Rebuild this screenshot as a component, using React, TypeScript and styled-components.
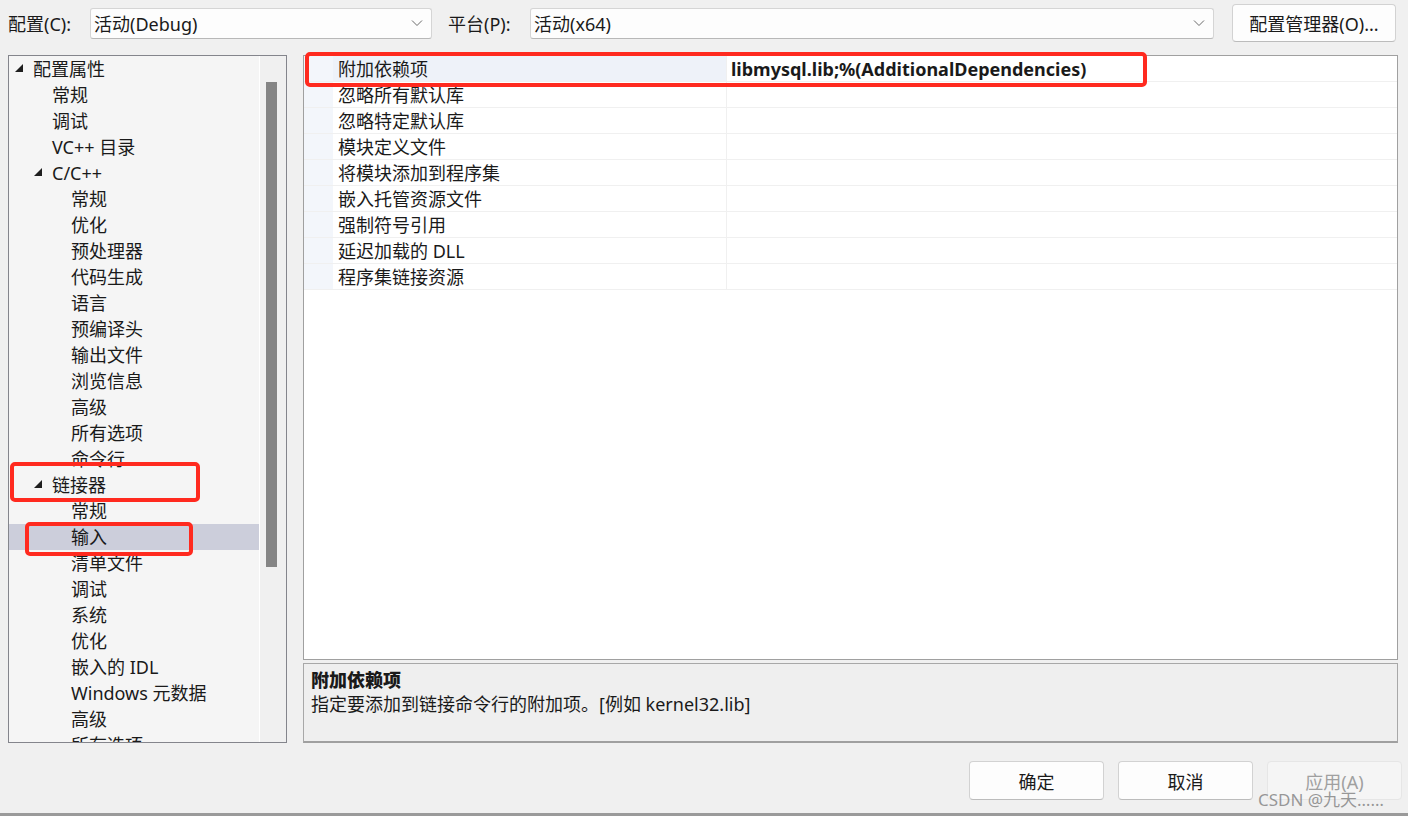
import React from 'react'
import styled, {createGlobalStyle} from 'styled-components'

const GlobalStyle = createGlobalStyle`
  html, body {
    margin: 0;
    padding: 0;
    background: #f0f0f0;
  }
  body {
    font-family: "Noto Sans", "Noto Sans CJK SC", sans-serif;
    color: #1a1a1a;
  }
`

interface TreeNode {
  label: string
  level: number
  expanded?: boolean
  selected?: boolean
}

const tree: TreeNode[] = [
  {label: '配置属性', level: 0, expanded: true},
  {label: '常规', level: 1},
  {label: '调试', level: 1},
  {label: 'VC++ 目录', level: 1},
  {label: 'C/C++', level: 1, expanded: true},
  {label: '常规', level: 2},
  {label: '优化', level: 2},
  {label: '预处理器', level: 2},
  {label: '代码生成', level: 2},
  {label: '语言', level: 2},
  {label: '预编译头', level: 2},
  {label: '输出文件', level: 2},
  {label: '浏览信息', level: 2},
  {label: '高级', level: 2},
  {label: '所有选项', level: 2},
  {label: '命令行', level: 2},
  {label: '链接器', level: 1, expanded: true},
  {label: '常规', level: 2},
  {label: '输入', level: 2, selected: true},
  {label: '清单文件', level: 2},
  {label: '调试', level: 2},
  {label: '系统', level: 2},
  {label: '优化', level: 2},
  {label: '嵌入的 IDL', level: 2},
  {label: 'Windows 元数据', level: 2},
  {label: '高级', level: 2},
  {label: '所有选项', level: 2},
]

const props: {name: string; value?: string}[] = [
  {name: '附加依赖项', value: 'libmysql.lib;%(AdditionalDependencies)'},
  {name: '忽略所有默认库'},
  {name: '忽略特定默认库'},
  {name: '模块定义文件'},
  {name: '将模块添加到程序集'},
  {name: '嵌入托管资源文件'},
  {name: '强制符号引用'},
  {name: '延迟加载的 DLL'},
  {name: '程序集链接资源'},
]

const Chevron = () => (
  <svg width="12" height="8" viewBox="0 0 12 8">
    <polyline points="1,1.5 6,6.5 11,1.5" fill="none" stroke="#6a6a6a" strokeWidth="1" />
  </svg>
)

const Twisty = () => (
  <svg width="8" height="8" viewBox="0 0 8 8">
    <polygon points="8,0 8,8 0,8" fill="#1e1e1e" />
  </svg>
)

const App: React.FC = () => {
  return (
    <Root>
      <GlobalStyle />
      <TopBar>
        <Label>配置(C):</Label>
        <Combo width={342}>
          <span>活动(Debug)</span>
          <Chevron />
        </Combo>
        <Label style={{marginLeft: 16}}>平台(P):</Label>
        <Combo width={684}>
          <span>活动(x64)</span>
          <Chevron />
        </Combo>
        <ManagerButton>配置管理器(O)...</ManagerButton>
      </TopBar>

      <Main>
        <TreePanel>
          <TreeList>
            {tree.map((n, i) => (
              <TreeRow key={i} level={n.level} selected={!!n.selected}>
                <TwistyBox>{n.expanded && <Twisty />}</TwistyBox>
                {n.label}
              </TreeRow>
            ))}
          </TreeList>
          <ScrollTrack>
            <ScrollThumb />
          </ScrollTrack>
        </TreePanel>

        <RightColumn>
          <GridPanel>
            {props.map((p, i) => (
              <GridRow key={i}>
                <Margin />
                <NameCell first={i === 0}>{p.name}</NameCell>
                <ValueCell>{p.value}</ValueCell>
              </GridRow>
            ))}
          </GridPanel>
          <DescPanel>
            <DescTitle>附加依赖项</DescTitle>
            <DescText>指定要添加到链接命令行的附加项。[例如 kernel32.lib]</DescText>
          </DescPanel>
        </RightColumn>
      </Main>

      <Footer>
        <DialogButton>确定</DialogButton>
        <DialogButton>取消</DialogButton>
        <DialogButton disabled>应用(A)</DialogButton>
      </Footer>
      <BottomEdge />

      <RedBox style={{left: 305, top: 52, width: 842, height: 35}} />
      <RedBox style={{left: 10, top: 462, width: 190, height: 40}} />
      <RedBox style={{left: 25, top: 522, width: 168, height: 34}} />
      <Watermark>CSDN @九天……</Watermark>
    </Root>
  )
}

export default App

const Root = styled('div')`
  position: relative;
  width: 1408px;
  height: 816px;
  overflow: hidden;
  background: #f0f0f0;
  font-size: 18px;
  display: flex;
  flex-direction: column;
`

const TopBar = styled('div')`
  height: 46px;
  display: flex;
  align-items: center;
  padding-left: 8px;
  box-sizing: border-box;
`

const Label = styled('span')`
  width: 82px;
  white-space: nowrap;
`

const Combo = styled('div')<{width: number}>`
  width: ${props => props.width}px;
  height: 31px;
  box-sizing: border-box;
  background: #fdfdfd;
  border: 1px solid #d5d5d5;
  border-bottom-color: #b8b8b8;
  border-radius: 3px;
  display: flex;
  align-items: center;
  justify-content: space-between;
  padding: 0 8px 0 3px;
`

const ManagerButton = styled('div')`
  margin-left: 18px;
  width: 164px;
  height: 38px;
  box-sizing: border-box;
  background: #fdfdfd;
  border: 1px solid #d2d2d2;
  border-bottom-color: #bcbcbc;
  border-radius: 4px;
  display: flex;
  align-items: center;
  justify-content: center;
`

const Main = styled('div')`
  margin-top: 9px;
  height: 688px;
  display: flex;
  padding-left: 8px;
`

const TreePanel = styled('div')`
  width: 279px;
  box-sizing: border-box;
  border: 1px solid #84858c;
  background: #f5f5f5;
  display: flex;
  overflow: hidden;
`

const TreeList = styled('div')`
  width: 250px;
  border-right: 1px solid #ffffff;
  overflow: hidden;
`

const TreeRow = styled('div')<{level: number; selected: boolean}>`
  height: 26px;
  display: flex;
  align-items: center;
  padding-left: ${props => 6 + props.level * 19}px;
  background: ${props => (props.selected ? '#cccedb' : 'transparent')};
  white-space: nowrap;
  line-height: 24px;
`

const TwistyBox = styled('span')`
  width: 18px;
  flex: none;
  display: flex;
  align-items: center;
  margin-top: -3px;
`

const ScrollTrack = styled('div')`
  flex: 1;
  background: #f0f0f0;
  padding: 26px 0 0 6px;
`

const ScrollThumb = styled('div')`
  width: 11px;
  height: 485px;
  background: #858585;
`

const RightColumn = styled('div')`
  margin-left: 16px;
  width: 1095px;
  display: flex;
  flex-direction: column;
  gap: 3px;
`

const GridPanel = styled('div')`
  flex: 1;
  box-sizing: border-box;
  border: 1px solid #a0a0a0;
  background: #ffffff;
`

const GridRow = styled('div')`
  display: grid;
  grid-template-columns: 29px 394px 1fr;
  height: 26px;
  border-bottom: 1px solid #f0f0f0;
  box-sizing: border-box;
  line-height: 24px;
`

const Margin = styled('div')`
  background: #f3f6fb;
`

const NameCell = styled('div')<{first: boolean}>`
  padding-left: 5px;
  display: flex;
  align-items: center;
  border-right: 1px solid #f0f0f0;
  background: ${props => (props.first ? '#eef2f9' : '#ffffff')};
  white-space: nowrap;
`

const ValueCell = styled('div')`
  padding-left: 4px;
  display: flex;
  align-items: center;
  font-weight: 700;
  white-space: nowrap;
`

const DescPanel = styled('div')`
  height: 80px;
  box-sizing: border-box;
  border: 1px solid #a8a8a8;
  border-bottom: 2px solid #a0a0a0;
  background: #efefef;
  padding: 4px 7px;
  display: flex;
  flex-direction: column;
`

const DescTitle = styled('div')`
  font-weight: 800;
  line-height: 24px;
`

const DescText = styled('div')`
  line-height: 24px;
`

const Footer = styled('div')`
  flex: 1;
  display: flex;
  justify-content: flex-end;
  align-items: flex-start;
  gap: 14px;
  padding: 18px 6px 0 0;
`

const DialogButton = styled('div')<{disabled?: boolean}>`
  width: 135px;
  height: 39px;
  box-sizing: border-box;
  border-radius: 4px;
  border: 1px solid ${props => (props.disabled ? '#e6e6e6' : '#d2d2d2')};
  border-bottom-color: ${props => (props.disabled ? '#e6e6e6' : '#bcbcbc')};
  background: ${props => (props.disabled ? '#f5f5f5' : '#fdfdfd')};
  color: ${props => (props.disabled ? '#a0a0a0' : '#1a1a1a')};
  display: flex;
  align-items: center;
  justify-content: center;
`

const BottomEdge = styled('div')`
  height: 3px;
  background: #9a9a9a;
`

const RedBox = styled('div')`
  position: absolute;
  box-sizing: border-box;
  border: 4px solid #ff2a1f;
  border-radius: 5px;
  pointer-events: none;
`

const Watermark = styled('div')`
  position: absolute;
  left: 1258px;
  top: 786px;
  font-size: 17px;
  color: rgba(120, 120, 120, 0.75);
  white-space: nowrap;
`
